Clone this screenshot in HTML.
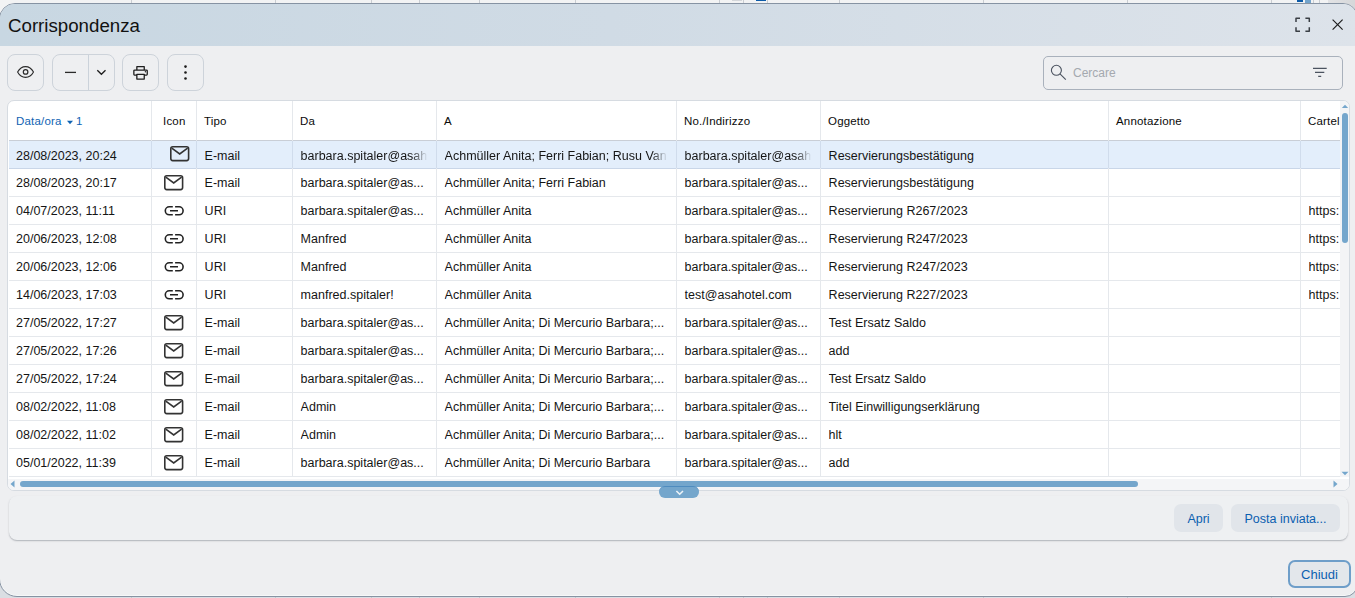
<!DOCTYPE html>
<html><head><meta charset="utf-8">
<style>
*{box-sizing:border-box;margin:0;padding:0}
html,body{width:1355px;height:598px;overflow:hidden;background:#dadee3;font-family:"Liberation Sans",sans-serif;color:#222}
.a{position:absolute}
svg{display:block}
#bgtop{left:0;top:0;width:1355px;height:14px;background:#f2f3f4}
#dlg{left:-1px;top:3px;width:1359px;height:594px;box-shadow:inset 0 -1px 0 #f7f8f8;border:1px solid #8693a3;border-radius:16px 15px 13px 18px;background:#eeeff1;overflow:hidden}
#hdr{left:0;top:0;width:1359px;height:42px;background:linear-gradient(90deg,#c8d7e2 0%,#d0dbe5 45%,#dde3ea 100%)}
#title{left:8px;top:16px;font-size:18.7px;line-height:20px;color:#111;white-space:nowrap}
.tb{position:absolute;top:54px;height:37px;border:1px solid #cdd3da;border-radius:8px}
#search{left:1043px;top:56px;width:300px;height:34px;border:1px solid #a9b1bc;border-radius:5px}
.ph{left:1073px;top:66px;font-size:12px;line-height:14px;color:#a4a9af;white-space:nowrap}
#tbl{left:7px;top:100px;width:1343px;height:391px;border:1px solid #d6dbe1;border-radius:7px;background:#fff;overflow:hidden}
.hc{position:absolute;top:115px;font-size:11.5px;line-height:12px;color:#0a0a0a;letter-spacing:.18px;white-space:nowrap}
.vl{position:absolute;width:1px;background:#e5e8ec}
.hl{position:absolute;height:1px;background:#e5e8ec}
.c{position:absolute;font-size:12.5px;line-height:14px;color:#151515;transform:translateX(.6px);white-space:nowrap;overflow:hidden}
#bpanel{left:9px;top:496px;width:1339px;height:44px;border-radius:8px;background:#eef0f2;box-shadow:0 1px 1.5px rgba(60,70,80,.35)}
.btn2{position:absolute;top:504px;height:28px;border-radius:7px;background:#e1e5ea;color:#0b60b0;font-size:12.5px;line-height:14px;padding-top:8px;text-align:center;white-space:nowrap}
#chiudi{left:1288px;top:560px;width:63px;height:28px;border:2px solid #6e9ec9;border-radius:7px;background:#e3e7eb;color:#0b60b0;font-size:13px;line-height:14px;text-align:center;padding-top:6px}
</style></head><body>
<div id="bgtop" class="a"></div>
<div class="a" style="left:1328px;top:0;width:27px;height:14px;background:linear-gradient(90deg,#e2e3e5,#d6d7d9)"></div>
<div class="a" style="left:131px;top:0;width:1px;height:4px;background:#c9cdd2"></div><div class="a" style="left:275px;top:0;width:1px;height:4px;background:#c9cdd2"></div><div class="a" style="left:371px;top:0;width:1px;height:4px;background:#c9cdd2"></div><div class="a" style="left:419px;top:0;width:1px;height:4px;background:#c9cdd2"></div><div class="a" style="left:479px;top:0;width:1px;height:4px;background:#c9cdd2"></div><div class="a" style="left:575px;top:0;width:1px;height:4px;background:#c9cdd2"></div><div class="a" style="left:719px;top:0;width:1px;height:4px;background:#c9cdd2"></div><div class="a" style="left:743px;top:0;width:1px;height:4px;background:#c9cdd2"></div><div class="a" style="left:767px;top:0;width:1px;height:4px;background:#c9cdd2"></div><div class="a" style="left:839px;top:0;width:1px;height:4px;background:#c9cdd2"></div><div class="a" style="left:983px;top:0;width:1px;height:4px;background:#c9cdd2"></div><div class="a" style="left:1127px;top:0;width:1px;height:4px;background:#c9cdd2"></div><div class="a" style="left:1271px;top:0;width:1px;height:4px;background:#c9cdd2"></div><div class="a" style="left:1313px;top:0;width:1px;height:4px;background:#c9cdd2"></div><div class="a" style="left:1319px;top:0;width:1px;height:4px;background:#c9cdd2"></div>
<div class="a" style="left:1297px;top:0;width:6px;height:2px;background:#0b5aa8"></div>
<div class="a" style="left:1305px;top:0;width:6px;height:4px;background:#73a4cc"></div>
<div class="a" style="left:732px;top:0;width:10px;height:1px;background:#d3d6da"></div>
<div class="a" style="left:756px;top:0;width:10px;height:1px;background:#0b5aa8"></div>
<div class="a" style="left:131px;top:595px;width:1px;height:3px;background:#c3c8ce"></div><div class="a" style="left:275px;top:595px;width:1px;height:3px;background:#c3c8ce"></div><div class="a" style="left:371px;top:595px;width:1px;height:3px;background:#c3c8ce"></div><div class="a" style="left:419px;top:595px;width:1px;height:3px;background:#c3c8ce"></div><div class="a" style="left:479px;top:595px;width:1px;height:3px;background:#c3c8ce"></div><div class="a" style="left:575px;top:595px;width:1px;height:3px;background:#c3c8ce"></div><div class="a" style="left:719px;top:595px;width:1px;height:3px;background:#c3c8ce"></div><div class="a" style="left:743px;top:595px;width:1px;height:3px;background:#c3c8ce"></div><div class="a" style="left:767px;top:595px;width:1px;height:3px;background:#c3c8ce"></div><div class="a" style="left:839px;top:595px;width:1px;height:3px;background:#c3c8ce"></div><div class="a" style="left:983px;top:595px;width:1px;height:3px;background:#c3c8ce"></div><div class="a" style="left:1127px;top:595px;width:1px;height:3px;background:#c3c8ce"></div><div class="a" style="left:1271px;top:595px;width:1px;height:3px;background:#c3c8ce"></div>
<div id="dlg" class="a"><div id="hdr" class="a"></div></div>
<div id="title" class="a">Corrispondenza</div>

<div class="tb" style="left:7px;width:37px"></div>
<div class="tb" style="left:52px;width:63px"></div><div class="vl" style="left:88px;top:55px;height:35px;background:#cbd2da"></div>
<div class="tb" style="left:122px;width:37px"></div>
<div class="tb" style="left:167px;width:37px"></div>
<div id="search" class="a"></div>
<div class="a ph">Cercare</div>
<div id="tbl" class="a"></div>
<div class="hc" style="left:16px;color:#0f63b3">Data/ora</div><div class="hc" style="left:76px;color:#0f63b3">1</div><svg class="a" style="left:0;top:0" width="100" height="140"><path d="M67 120.7 H73 L70 124.3 Z" fill="#0f63b3"/></svg>
<div class="hc" style="left:163px">Icon</div>
<div class="hc" style="left:204px">Tipo</div>
<div class="hc" style="left:300px">Da</div>
<div class="hc" style="left:444px">A</div>
<div class="hc" style="left:684px">No./Indirizzo</div>
<div class="hc" style="left:828px">Oggetto</div>
<div class="hc" style="left:1116px">Annotazione</div>
<div class="hc" style="left:1308px;width:32px;overflow:hidden">Cartel</div>
<div class="hl" style="left:9px;top:140px;width:1331px;background:#c9ced6"></div>
<div class="a" style="left:9px;top:141px;width:1331px;height:27px;background:#e3eefb"></div>
<div class="hl" style="left:9px;top:168px;width:1331px;background:#c9d6e8"></div>
<div class="hl" style="left:9px;top:196px;width:1331px"></div>
<div class="hl" style="left:9px;top:224px;width:1331px"></div>
<div class="hl" style="left:9px;top:252px;width:1331px"></div>
<div class="hl" style="left:9px;top:280px;width:1331px"></div>
<div class="hl" style="left:9px;top:308px;width:1331px"></div>
<div class="hl" style="left:9px;top:336px;width:1331px"></div>
<div class="hl" style="left:9px;top:364px;width:1331px"></div>
<div class="hl" style="left:9px;top:392px;width:1331px"></div>
<div class="hl" style="left:9px;top:420px;width:1331px"></div>
<div class="hl" style="left:9px;top:448px;width:1331px"></div>
<div class="hl" style="left:9px;top:476px;width:1331px"></div>
<div class="vl" style="left:151px;top:101px;height:376px"></div>
<div class="vl" style="left:196px;top:101px;height:376px"></div>
<div class="vl" style="left:292px;top:101px;height:376px"></div>
<div class="vl" style="left:436px;top:101px;height:376px"></div>
<div class="vl" style="left:676px;top:101px;height:376px"></div>
<div class="vl" style="left:820px;top:101px;height:376px"></div>
<div class="vl" style="left:1108px;top:101px;height:376px"></div>
<div class="vl" style="left:1300px;top:101px;height:376px"></div>
<div class="vl" style="left:151px;top:141px;height:27px;background:#d0dcec"></div>
<div class="vl" style="left:196px;top:141px;height:27px;background:#d0dcec"></div>
<div class="vl" style="left:292px;top:141px;height:27px;background:#d0dcec"></div>
<div class="vl" style="left:436px;top:141px;height:27px;background:#d0dcec"></div>
<div class="vl" style="left:676px;top:141px;height:27px;background:#d0dcec"></div>
<div class="vl" style="left:820px;top:141px;height:27px;background:#d0dcec"></div>
<div class="vl" style="left:1108px;top:141px;height:27px;background:#d0dcec"></div>
<div class="vl" style="left:1300px;top:141px;height:27px;background:#d0dcec"></div>
<div class="c" style="left:16px;top:149px;width:129px;transform:none">28/08/2023, 20:24</div>
<div class="a" style="left:170px;top:146px"><svg width="20" height="16" viewBox="0 0 20 16"><rect x="0.8" y="0.8" width="17.8" height="13.8" rx="2" fill="none" stroke="#333" stroke-width="1.6"/><path d="M1.8 2.2 L9.7 8 L17.6 2.2" fill="none" stroke="#333" stroke-width="1.6"/></svg></div>
<div class="c" style="left:204px;top:149px;width:82px">E-mail</div>
<div class="c" style="left:300px;top:149px;width:127px;-webkit-mask-image:linear-gradient(90deg,#000 calc(100% - 16px),transparent)">barbara.spitaler@asahotel.com</div>
<div class="c" style="left:444px;top:149px;width:223px;-webkit-mask-image:linear-gradient(90deg,#000 calc(100% - 16px),transparent)">Achmüller Anita; Ferri Fabian; Rusu Vanessa</div>
<div class="c" style="left:684px;top:149px;width:127px;-webkit-mask-image:linear-gradient(90deg,#000 calc(100% - 16px),transparent)">barbara.spitaler@asahotel.com</div>
<div class="c" style="left:828px;top:149px;width:274px">Reservierungsbestätigung</div>
<div class="c" style="left:16px;top:176px;width:129px;transform:none">28/08/2023, 20:17</div>
<div class="a" style="left:164px;top:175px"><svg width="20" height="16" viewBox="0 0 20 16"><rect x="0.8" y="0.8" width="17.8" height="13.8" rx="2" fill="none" stroke="#333" stroke-width="1.6"/><path d="M1.8 2.2 L9.7 8 L17.6 2.2" fill="none" stroke="#333" stroke-width="1.6"/></svg></div>
<div class="c" style="left:204px;top:176px;width:82px">E-mail</div>
<div class="c" style="left:300px;top:176px;width:130px">barbara.spitaler@as...</div>
<div class="c" style="left:444px;top:176px;width:226px">Achmüller Anita; Ferri Fabian</div>
<div class="c" style="left:684px;top:176px;width:130px">barbara.spitaler@as...</div>
<div class="c" style="left:828px;top:176px;width:274px">Reservierungsbestätigung</div>
<div class="c" style="left:16px;top:204px;width:129px;transform:none">04/07/2023, 11:11</div>
<div class="a" style="left:164px;top:206px"><svg width="20" height="10" viewBox="0 0 20 10"><path d="M8.8 0.8 H5.3 A4 4 0 0 0 5.3 8.8 H8.8 M11.1 0.8 H15.1 A4 4 0 0 1 15.1 8.8 H11.1 M6 4.8 H14" fill="none" stroke="#222" stroke-width="1.6"/></svg></div>
<div class="c" style="left:204px;top:204px;width:82px">URI</div>
<div class="c" style="left:300px;top:204px;width:130px">barbara.spitaler@as...</div>
<div class="c" style="left:444px;top:204px;width:226px">Achmüller Anita</div>
<div class="c" style="left:684px;top:204px;width:130px">barbara.spitaler@as...</div>
<div class="c" style="left:828px;top:204px;width:274px">Reservierung R267/2023</div>
<div class="c" style="left:1308px;top:204px;width:32px">https:</div>
<div class="c" style="left:16px;top:232px;width:129px;transform:none">20/06/2023, 12:08</div>
<div class="a" style="left:164px;top:234px"><svg width="20" height="10" viewBox="0 0 20 10"><path d="M8.8 0.8 H5.3 A4 4 0 0 0 5.3 8.8 H8.8 M11.1 0.8 H15.1 A4 4 0 0 1 15.1 8.8 H11.1 M6 4.8 H14" fill="none" stroke="#222" stroke-width="1.6"/></svg></div>
<div class="c" style="left:204px;top:232px;width:82px">URI</div>
<div class="c" style="left:300px;top:232px;width:130px">Manfred</div>
<div class="c" style="left:444px;top:232px;width:226px">Achmüller Anita</div>
<div class="c" style="left:684px;top:232px;width:130px">barbara.spitaler@as...</div>
<div class="c" style="left:828px;top:232px;width:274px">Reservierung R247/2023</div>
<div class="c" style="left:1308px;top:232px;width:32px">https:</div>
<div class="c" style="left:16px;top:260px;width:129px;transform:none">20/06/2023, 12:06</div>
<div class="a" style="left:164px;top:262px"><svg width="20" height="10" viewBox="0 0 20 10"><path d="M8.8 0.8 H5.3 A4 4 0 0 0 5.3 8.8 H8.8 M11.1 0.8 H15.1 A4 4 0 0 1 15.1 8.8 H11.1 M6 4.8 H14" fill="none" stroke="#222" stroke-width="1.6"/></svg></div>
<div class="c" style="left:204px;top:260px;width:82px">URI</div>
<div class="c" style="left:300px;top:260px;width:130px">Manfred</div>
<div class="c" style="left:444px;top:260px;width:226px">Achmüller Anita</div>
<div class="c" style="left:684px;top:260px;width:130px">barbara.spitaler@as...</div>
<div class="c" style="left:828px;top:260px;width:274px">Reservierung R247/2023</div>
<div class="c" style="left:1308px;top:260px;width:32px">https:</div>
<div class="c" style="left:16px;top:288px;width:129px;transform:none">14/06/2023, 17:03</div>
<div class="a" style="left:164px;top:290px"><svg width="20" height="10" viewBox="0 0 20 10"><path d="M8.8 0.8 H5.3 A4 4 0 0 0 5.3 8.8 H8.8 M11.1 0.8 H15.1 A4 4 0 0 1 15.1 8.8 H11.1 M6 4.8 H14" fill="none" stroke="#222" stroke-width="1.6"/></svg></div>
<div class="c" style="left:204px;top:288px;width:82px">URI</div>
<div class="c" style="left:300px;top:288px;width:130px">manfred.spitaler!</div>
<div class="c" style="left:444px;top:288px;width:226px">Achmüller Anita</div>
<div class="c" style="left:684px;top:288px;width:130px">test@asahotel.com</div>
<div class="c" style="left:828px;top:288px;width:274px">Reservierung R227/2023</div>
<div class="c" style="left:1308px;top:288px;width:32px">https:</div>
<div class="c" style="left:16px;top:316px;width:129px;transform:none">27/05/2022, 17:27</div>
<div class="a" style="left:164px;top:315px"><svg width="20" height="16" viewBox="0 0 20 16"><rect x="0.8" y="0.8" width="17.8" height="13.8" rx="2" fill="none" stroke="#333" stroke-width="1.6"/><path d="M1.8 2.2 L9.7 8 L17.6 2.2" fill="none" stroke="#333" stroke-width="1.6"/></svg></div>
<div class="c" style="left:204px;top:316px;width:82px">E-mail</div>
<div class="c" style="left:300px;top:316px;width:130px">barbara.spitaler@as...</div>
<div class="c" style="left:444px;top:316px;width:226px">Achmüller Anita; Di Mercurio Barbara;...</div>
<div class="c" style="left:684px;top:316px;width:130px">barbara.spitaler@as...</div>
<div class="c" style="left:828px;top:316px;width:274px">Test Ersatz Saldo</div>
<div class="c" style="left:16px;top:344px;width:129px;transform:none">27/05/2022, 17:26</div>
<div class="a" style="left:164px;top:343px"><svg width="20" height="16" viewBox="0 0 20 16"><rect x="0.8" y="0.8" width="17.8" height="13.8" rx="2" fill="none" stroke="#333" stroke-width="1.6"/><path d="M1.8 2.2 L9.7 8 L17.6 2.2" fill="none" stroke="#333" stroke-width="1.6"/></svg></div>
<div class="c" style="left:204px;top:344px;width:82px">E-mail</div>
<div class="c" style="left:300px;top:344px;width:130px">barbara.spitaler@as...</div>
<div class="c" style="left:444px;top:344px;width:226px">Achmüller Anita; Di Mercurio Barbara;...</div>
<div class="c" style="left:684px;top:344px;width:130px">barbara.spitaler@as...</div>
<div class="c" style="left:828px;top:344px;width:274px">add</div>
<div class="c" style="left:16px;top:372px;width:129px;transform:none">27/05/2022, 17:24</div>
<div class="a" style="left:164px;top:371px"><svg width="20" height="16" viewBox="0 0 20 16"><rect x="0.8" y="0.8" width="17.8" height="13.8" rx="2" fill="none" stroke="#333" stroke-width="1.6"/><path d="M1.8 2.2 L9.7 8 L17.6 2.2" fill="none" stroke="#333" stroke-width="1.6"/></svg></div>
<div class="c" style="left:204px;top:372px;width:82px">E-mail</div>
<div class="c" style="left:300px;top:372px;width:130px">barbara.spitaler@as...</div>
<div class="c" style="left:444px;top:372px;width:226px">Achmüller Anita; Di Mercurio Barbara;...</div>
<div class="c" style="left:684px;top:372px;width:130px">barbara.spitaler@as...</div>
<div class="c" style="left:828px;top:372px;width:274px">Test Ersatz Saldo</div>
<div class="c" style="left:16px;top:400px;width:129px;transform:none">08/02/2022, 11:08</div>
<div class="a" style="left:164px;top:399px"><svg width="20" height="16" viewBox="0 0 20 16"><rect x="0.8" y="0.8" width="17.8" height="13.8" rx="2" fill="none" stroke="#333" stroke-width="1.6"/><path d="M1.8 2.2 L9.7 8 L17.6 2.2" fill="none" stroke="#333" stroke-width="1.6"/></svg></div>
<div class="c" style="left:204px;top:400px;width:82px">E-mail</div>
<div class="c" style="left:300px;top:400px;width:130px">Admin</div>
<div class="c" style="left:444px;top:400px;width:226px">Achmüller Anita; Di Mercurio Barbara;...</div>
<div class="c" style="left:684px;top:400px;width:130px">barbara.spitaler@as...</div>
<div class="c" style="left:828px;top:400px;width:274px">Titel Einwilligungserklärung</div>
<div class="c" style="left:16px;top:428px;width:129px;transform:none">08/02/2022, 11:02</div>
<div class="a" style="left:164px;top:427px"><svg width="20" height="16" viewBox="0 0 20 16"><rect x="0.8" y="0.8" width="17.8" height="13.8" rx="2" fill="none" stroke="#333" stroke-width="1.6"/><path d="M1.8 2.2 L9.7 8 L17.6 2.2" fill="none" stroke="#333" stroke-width="1.6"/></svg></div>
<div class="c" style="left:204px;top:428px;width:82px">E-mail</div>
<div class="c" style="left:300px;top:428px;width:130px">Admin</div>
<div class="c" style="left:444px;top:428px;width:226px">Achmüller Anita; Di Mercurio Barbara;...</div>
<div class="c" style="left:684px;top:428px;width:130px">barbara.spitaler@as...</div>
<div class="c" style="left:828px;top:428px;width:274px">hlt</div>
<div class="c" style="left:16px;top:456px;width:129px;transform:none">05/01/2022, 11:39</div>
<div class="a" style="left:164px;top:455px"><svg width="20" height="16" viewBox="0 0 20 16"><rect x="0.8" y="0.8" width="17.8" height="13.8" rx="2" fill="none" stroke="#333" stroke-width="1.6"/><path d="M1.8 2.2 L9.7 8 L17.6 2.2" fill="none" stroke="#333" stroke-width="1.6"/></svg></div>
<div class="c" style="left:204px;top:456px;width:82px">E-mail</div>
<div class="c" style="left:300px;top:456px;width:130px">barbara.spitaler@as...</div>
<div class="c" style="left:444px;top:456px;width:226px">Achmüller Anita; Di Mercurio Barbara</div>
<div class="c" style="left:684px;top:456px;width:130px">barbara.spitaler@as...</div>
<div class="c" style="left:828px;top:456px;width:274px">add</div>
<div class="a" style="left:1340px;top:101px;width:9px;height:376px;background:#f3f4f6;border-radius:0 6px 0 0"></div>
<div class="a" style="left:1342px;top:113px;width:6px;height:130px;border-radius:3px;background:#74a6cc"></div>
<svg class="a" style="left:1341px;top:104px" width="8" height="5"><path d="M0.8 4 L4 0.8 L7.2 4 Z" fill="#74a6cc"/></svg>
<svg class="a" style="left:1341px;top:471px" width="8" height="5"><path d="M0.5 0.8 L4 4.3 L7.5 0.8 Z" fill="#74a6cc"/></svg>
<div class="a" style="left:8px;top:479px;width:1341px;height:11px;background:#f4f5f7;border-radius:0 0 6px 6px"></div>
<div class="a" style="left:20px;top:481px;width:1118px;height:6px;border-radius:3px;background:#74a6cc"></div>
<svg class="a" style="left:10px;top:480px" width="6" height="8"><path d="M4.5 0.5 L0.5 4 L4.5 7.5 Z" fill="#74a6cc"/></svg>
<svg class="a" style="left:1333px;top:480px" width="6" height="8"><path d="M0.5 0.5 L4.5 4 L0.5 7.5 Z" fill="#74a6cc"/></svg>
<div id="bpanel" class="a"></div>
<div class="a" style="left:659px;top:486px;width:40px;height:12px;border-radius:6px;background:#74a6cc;border-top:1px solid #4f8cbf"></div>
<div class="btn2" style="left:1174px;width:49px">Apri</div>
<div class="btn2" style="left:1231px;width:109px">Posta inviata...</div>
<div id="chiudi" class="a">Chiudi</div>
<svg class="a" style="left:0;top:0" width="1355" height="598" viewBox="0 0 1355 598"><path d="M1296 22 V18.3 H1300 M1305.4 18.3 H1309.3 V22 M1309.3 27.3 V31.2 H1305.4 M1300 31.2 H1296 V27.3" fill="none" stroke="#3a3f45" stroke-width="1.5" stroke-linejoin="round"/><path d="M1332.6 19.6 L1342.6 29.6 M1342.6 19.6 L1332.6 29.6" fill="none" stroke="#1c1c1c" stroke-width="1.15"/><path d="M17.6 72 C21.5 64.8 29.6 64.8 33.5 72 C29.6 79.2 21.5 79.2 17.6 72 Z" fill="none" stroke="#2a2a2a" stroke-width="1.1" stroke-linejoin="round"/><circle cx="25.6" cy="71.9" r="2.3" fill="none" stroke="#2a2a2a" stroke-width="1.2"/><path d="M65 72.4 H76" stroke="#2a2a2a" stroke-width="1.3"/><path d="M97.3 70.2 L101.4 74.3 L105.5 70.2" fill="none" stroke="#1e1e1e" stroke-width="1.3"/><path d="M136.85 69.8 V66.65 H144.25 V69.8 M136.85 75.05 H134.5 A0.7 0.7 0 0 1 133.85 74.35 V70.9 A0.85 0.85 0 0 1 134.7 70.05 H146.4 A0.85 0.85 0 0 1 147.25 70.9 V74.35 A0.7 0.7 0 0 1 146.55 75.05 H144.25 M136.85 74.35 H144.25 V79.05 H136.85 Z" fill="none" stroke="#1e1e1e" stroke-width="1.3" stroke-linejoin="round"/><circle cx="145.4" cy="71.7" r="0.7" fill="#1e1e1e"/><circle cx="185.5" cy="66.6" r="1.3" fill="#1a1a1a"/><circle cx="185.5" cy="72.5" r="1.3" fill="#1a1a1a"/><circle cx="185.5" cy="78.5" r="1.3" fill="#1a1a1a"/><circle cx="1056.4" cy="70.3" r="5" fill="none" stroke="#4b5360" stroke-width="1.1"/><path d="M1060 73.9 L1065.8 79.6" stroke="#4b5360" stroke-width="1.1"/><path d="M1313 68.4 H1326.7 M1315 72.4 H1324.3 M1318.2 76.4 H1321.2" stroke="#4b5360" stroke-width="1.2"/><path d="M676.4 491 L679.7 494.2 L683 491" fill="none" stroke="#eef4f8" stroke-width="1.6"/></svg>
</body></html>
